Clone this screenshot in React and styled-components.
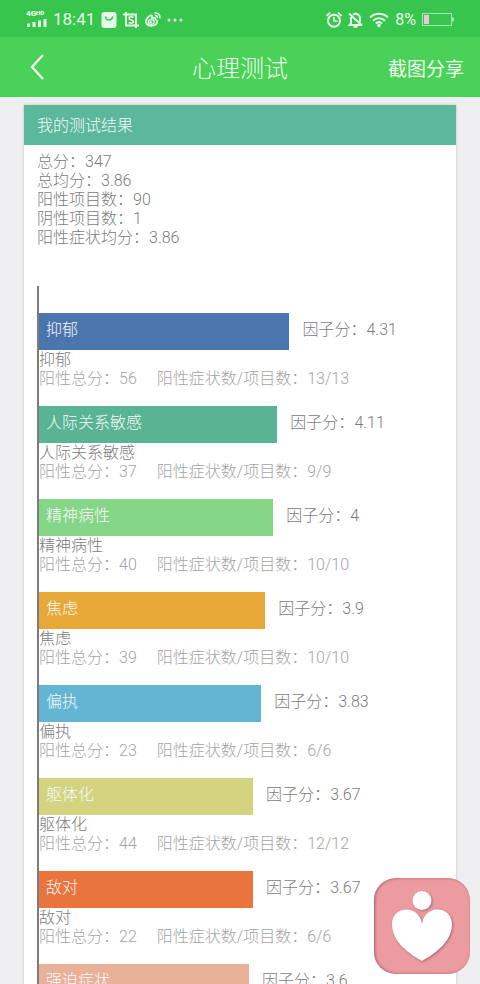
import styled, { createGlobalStyle } from "styled-components"

const GlobalStyle = createGlobalStyle`
* {
box-sizing: border-box;
}
body {
margin: 0;
background-color: #efeff2;
font-family: Roboto, "Noto Sans CJK SC", sans-serif;
font-weight: 300;
font-size: 16px;
line-height: 19px;
}
`
const Container = styled.div`
display: flex;
flex-direction: column;
height: 100vh;
`
const StatusBar = styled.div`
display: flex;
align-items: center;
justify-content: space-between;
height: 37px;
flex-shrink: 0;
padding: 2px 26px 0;
background-color: #38c54d;
color: #e6fbe8;
`
const StatusGroup = styled.div`
display: flex;
align-items: center;
gap: 6px;
`
const Signal = styled.div`
display: flex;
flex-direction: column;
width: 21px;
padding-bottom: 2px;
`
const Network = styled.span`
display: flex;
font-size: 8px;
line-height: 8px;
font-weight: 900;
`
const NetworkMode = styled.span`
font-size: 6px;
line-height: 6px;
`
const Clock = styled.span`
font-size: 17px;
font-weight: 400;
`
const Battery = styled.span`
font-size: 16px;
font-weight: 400;
`
const Navbar = styled.header`
display: grid;
grid-template-columns: 1fr auto 1fr;
align-items: center;
height: 60px;
flex-shrink: 0;
padding: 0 16px;
background-color: #4ad157;
color: #eefdef;
`
const BackButton = styled.button`
display: flex;
justify-self: start;
padding: 0 12px;
border: none;
background: none;
color: inherit;
cursor: pointer;
`
const Title = styled.h1`
margin: 0;
padding-top: 3px;
font-size: 24px;
line-height: 32px;
font-weight: 300;
`
const ShareButton = styled.button`
justify-self: end;
padding: 0;
border: none;
background: none;
color: inherit;
font-family: inherit;
font-size: 19px;
font-weight: 400;
cursor: pointer;
`
const Content = styled.main`
flex: 1;
min-height: 0;
padding: 8px 24px;
overflow-y: auto;
scrollbar-width: none;
`
const Card = styled.section`
background-color: #fff;
box-shadow: 0 0 3px rgba(0, 0, 0, 0.2);
`
const CardTitle = styled.h2`
margin: 0;
padding: 2px 13px 0;
font-size: 16px;
font-weight: 300;
line-height: 38px;
background-color: #5cb89b;
color: #f0faf6;
`
const CardBody = styled.div`
padding: 7px 13px 24px;
color: #7c7c7c;
`
const Summary = styled.div`
margin-bottom: 39px;
`
const SummaryItem = styled.div``
const Chart = styled.div`
display: flex;
flex-direction: column;
gap: 18px;
padding-top: 27px;
border-left: 2px solid #7c7c7c;
`
const Factor = styled.div``
const BarRow = styled.div`
display: flex;
line-height: 33px;
`
const Bar = styled.div`
flex-shrink: 0;
height: 37px;
padding-left: 7px;
background-color: ${props => props.color};
color: #f6f8fa;
`
const Score = styled.span`
margin-left: 13px;
`
const FactorName = styled.div``
const FactorDetail = styled.div`
display: flex;
gap: 20px;
color: #a4a4a4;
`
const FloatButton = styled.button`
position: fixed;
right: 10px;
bottom: 10px;
width: 96px;
height: 96px;
padding: 0;
border: none;
border-radius: 22px;
background-color: #ec9ba0;
box-shadow: inset 1px 0 3px rgba(110, 50, 60, 0.6);
cursor: pointer;
`

const summary = [
    { label: "总分", value: "347" },
    { label: "总均分", value: "3.86" },
    { label: "阳性项目数", value: "90" },
    { label: "阴性项目数", value: "1" },
    { label: "阳性症状均分", value: "3.86" },
]

const factors = [
    { name: "抑郁", score: 4.31, total: 56, items: "13/13", color: "#4b75ad" },
    { name: "人际关系敏感", score: 4.11, total: 37, items: "9/9", color: "#58b492" },
    { name: "精神病性", score: 4, total: 40, items: "10/10", color: "#86d688" },
    { name: "焦虑", score: 3.9, total: 39, items: "10/10", color: "#e8a838" },
    { name: "偏执", score: 3.83, total: 23, items: "6/6", color: "#62b6d3" },
    { name: "躯体化", score: 3.67, total: 44, items: "12/12", color: "#d4d480" },
    { name: "敌对", score: 3.67, total: 22, items: "6/6", color: "#e9743e" },
    { name: "强迫症状", score: 3.6, color: "#eab199" },
]

// full chart width stands for a score of 7
const barWidth = score => Math.ceil((score / 7) * 100) + "%"

const SignalIcon = () => (
    <svg width="21" height="9" viewBox="0 0 21 9" stroke="currentColor" strokeWidth="3">
        <path d="M2.500 5.500V9M8 4V9M13.500 2.500V9M19 1V9" />
    </svg>
)

const BagIcon = () => (
    <svg width="16" height="16" viewBox="0 0 16 16">
        <rect x="0.500" width="15" height="16" rx="3" fill="currentColor" />
        <path d="M4.500 5c.5 4 6.500 4 7 0" fill="none" stroke="#38c54d" strokeWidth="1.500" strokeLinecap="round" />
    </svg>
)

const CropIcon = () => (
    <svg width="16" height="16" viewBox="0 0 16 16" fill="none" stroke="currentColor">
        <path d="M0 2.500H13V14M3 0V13.500H16M13 13v3" strokeWidth="2" />
        <path d="M10.500 5.500C9 4.200 6 4.300 6 6.200S10.500 7.700 10.500 9.500 7.500 11.700 5.700 10.300" strokeWidth="1.600" />
    </svg>
)

const WeiboIcon = () => (
    <svg width="16" height="15" viewBox="0 0 16 15" fill="none" stroke="currentColor">
        <path d="M5.500 3.500C3.500 4.200.8 7.200.8 9.600c0 2.500 2.700 4.300 5.700 4.300 3.300 0 5.700-2 5.700-4.200 0-1.500-1.200-2-2-2.200.4-1.600-.8-2.200-3.200-1.300.4-1.900 0-3-1.500-2.700z" strokeWidth="1.800" />
        <ellipse cx="6.200" cy="10" rx="3" ry="2.400" strokeWidth="1.300" />
        <circle cx="5.700" cy="10.300" r="1.200" fill="currentColor" stroke="none" />
        <path d="M9.500 1c3.500-.7 6.200 2.200 5.200 5.500M9.800 3.600c1.800-.3 3 .9 2.500 2.500" strokeWidth="1.500" />
    </svg>
)

const DotsIcon = () => (
    <svg width="16" height="4" viewBox="0 0 16 4" fill="currentColor">
        <circle cx="2" cy="2" r="1.500" />
        <circle cx="8" cy="2" r="1.500" />
        <circle cx="14" cy="2" r="1.500" />
    </svg>
)

const AlarmIcon = () => (
    <svg width="16" height="16" viewBox="0 0 16 16" fill="none" stroke="currentColor" strokeLinecap="round">
        <circle cx="8" cy="8.700" r="6" strokeWidth="2" />
        <path d="M8 5.500V9h2.800M1 3.500 3.500 1.200M15 3.500l-2.500-2.300" strokeWidth="1.700" />
    </svg>
)

const MuteIcon = () => (
    <svg width="15" height="16" viewBox="0 0 15 16" fill="none" stroke="currentColor" strokeWidth="1.900">
        <path d="M3 5v6.500L1.500 13h11M5 2.800c3-2.300 7-.2 7 3.700v4M1 1.500l13 12M7.500.5v1.500" />
        <path d="M5.500 14.800h4" />
    </svg>
)

const WifiIcon = () => (
    <svg width="20" height="16" viewBox="0 0 20 16" fill="none" stroke="currentColor" strokeWidth="2">
        <path d="M1 5.500c5-5 13-5 18 0M4 8.700c3.500-3.300 8.500-3.300 12 0M6.800 11.500c2-1.700 4.400-1.700 6.400 0" />
        <circle cx="10" cy="13.500" r="1.800" fill="currentColor" stroke="none" />
    </svg>
)

const BatteryIcon = () => (
    <svg width="32" height="13" viewBox="0 0 32 13">
        <rect x="0.500" y="0.500" width="29" height="12" fill="none" stroke="#a5e6ac" />
        <rect x="2" y="2" width="5" height="9" fill="#f1c4dc" />
        <path d="M31 4.500v4" stroke="#a5e6ac" strokeWidth="2" />
    </svg>
)

const BackIcon = () => (
    <svg width="18" height="28" viewBox="0 0 18 28" fill="none" stroke="currentColor" strokeWidth="2.400">
        <path d="M15 2 4 14l11 12" />
    </svg>
)

const HeartIcon = () => (
    <svg width="96" height="96" viewBox="0 0 96 96" fill="#fff">
        <g style={{ filter: "drop-shadow(1px 1px 1px rgba(110, 50, 60, 0.5))" }}>
            <circle cx="48" cy="22.500" r="9.500" />
            <path d="M48 46C47 38 41 31.500 33 31.500 24 31.500 18 37.500 18 46c0 15 12 27 30 37 18-10 30-22 30-37 0-8.500-6-14.500-15-14.500C55 31.500 49 38 48 46z" />
        </g>
    </svg>
)

export default function App() {
    return (
        <Container>
            <GlobalStyle/>
            <StatusBar>
                <StatusGroup>
                    <Signal>
                        <Network>4G<NetworkMode>HD</NetworkMode></Network>
                        <SignalIcon/>
                    </Signal>
                    <Clock>18:41</Clock>
                    <BagIcon/>
                    <CropIcon/>
                    <WeiboIcon/>
                    <DotsIcon/>
                </StatusGroup>
                <StatusGroup>
                    <AlarmIcon/>
                    <MuteIcon/>
                    <WifiIcon/>
                    <Battery>8%</Battery>
                    <BatteryIcon/>
                </StatusGroup>
            </StatusBar>
            <Navbar>
                <BackButton aria-label="返回"><BackIcon/></BackButton>
                <Title>心理测试</Title>
                <ShareButton>截图分享</ShareButton>
            </Navbar>
            <Content>
                <Card>
                    <CardTitle>我的测试结果</CardTitle>
                    <CardBody>
                        <Summary>
                            {summary.map(item => (
                                <SummaryItem key={item.label}>{item.label}：{item.value}</SummaryItem>
                            ))}
                        </Summary>
                        <Chart>
                            {factors.map(factor => (
                                <Factor key={factor.name}>
                                    <BarRow>
                                        <Bar color={factor.color} style={{ width: barWidth(factor.score) }}>{factor.name}</Bar>
                                        <Score>因子分：{factor.score}</Score>
                                    </BarRow>
                                    {factor.items && (
                                        <>
                                            <FactorName>{factor.name}</FactorName>
                                            <FactorDetail>
                                                <span>阳性总分：{factor.total}</span>
                                                <span>阳性症状数/项目数：{factor.items}</span>
                                            </FactorDetail>
                                        </>
                                    )}
                                </Factor>
                            ))}
                        </Chart>
                    </CardBody>
                </Card>
            </Content>
            <FloatButton aria-label="心理咨询"><HeartIcon/></FloatButton>
        </Container>
    )
}
